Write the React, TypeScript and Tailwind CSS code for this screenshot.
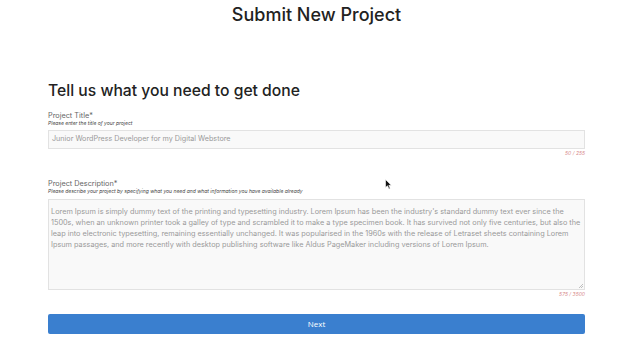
export default function App() {
  const font = { fontFamily: 'Inter, sans-serif' };
  return (
    <div className="relative w-[640px] h-[360px] bg-white overflow-hidden" style={font}>
      <div className="w-[633px]">
        <div className="pt-[4px] text-center text-[18px] leading-[22px] text-[#222] font-medium">Submit New Project</div>
        <div className="pl-[48px] pr-[48px] pt-[55px]">
          <div className="text-[15.7px] leading-[19px] text-[#222] font-medium">Tell us what you need to get done</div>
          <div className="mt-[11px] text-[7.3px] leading-[9px] text-[#666]">Project Title*</div>
          <div className="text-[5px] leading-[7px] italic text-[#444]">Please enter the title of your project</div>
          <div className="mt-[3px] h-[19px] border border-[#e2e2e2] bg-[#f9f9f9] flex items-center px-[3px] text-[7.2px] text-[#999]">Junior WordPress Developer for my Digital Webstore</div>
          <div className="text-right text-[5px] leading-[8px] italic text-[#d78a8a]">50 / 255</div>
          <div className="mt-[22px] text-[7.3px] leading-[9px] text-[#666]">Project Description*</div>
          <div className="text-[5px] leading-[7px] italic text-[#444]">Please describe your project by specifying what you need and what information you have available already</div>
          <div className="relative mt-[4px] h-[91px] border border-[#e2e2e2] bg-[#f9f9f9] px-[2px] pt-[6px] text-[7.3px] leading-[11px] text-[#999]">
            Lorem Ipsum is simply dummy text of the printing and typesetting industry. Lorem Ipsum has been the industry's standard dummy text ever since the 1500s, when an unknown printer took a galley of type and scrambled it to make a type specimen book. It has survived not only five centuries, but also the leap into electronic typesetting, remaining essentially unchanged. It was popularised in the 1960s with the release of Letraset sheets containing Lorem Ipsum passages, and more recently with desktop publishing software like Aldus PageMaker including versions of Lorem Ipsum.
            <svg className="absolute right-[1px] bottom-[1px]" width="5" height="5" viewBox="0 0 5 5"><path d="M5 1L1 5M5 3L3 5" stroke="#999" strokeWidth="0.6" /></svg>
          </div>
          <div className="text-right text-[5px] leading-[8px] italic text-[#d78a8a]">575 / 3500</div>
          <button className="mt-[16px] w-full h-[20px] rounded-[2px] bg-[#3a7fcf] text-white text-[8px]" style={{ fontFamily: '"Open Sans", sans-serif' }}>Next</button>
        </div>
      </div>
      <svg className="absolute left-[385px] top-[179px]" width="7" height="11" viewBox="0 0 7 11"><path d="M0.5 0.5L0.5 8.5L2.5 6.8L4 10L5.2 9.4L3.8 6.3L6.3 6.3Z" fill="#111" stroke="#fff" strokeWidth="0.6" /></svg>
    </div>
  );
}
